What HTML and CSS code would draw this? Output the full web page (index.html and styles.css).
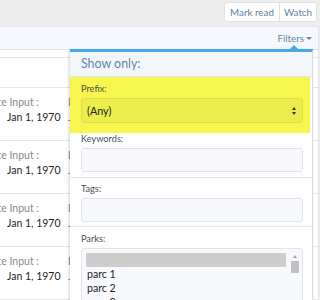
FILE: index.html
```html
<!DOCTYPE html>
<html>
<head>
<meta charset="utf-8">
<link rel="stylesheet" href="styles.css">
</head>
<body>
<div class="top">
  <div class="btn-group">
    <a class="btn">Mark read</a>
    <a class="btn">Watch</a>
  </div>
</div>
<div class="block">
  <div class="block-header">
    <span class="filters">Filters <span class="caret"></span></span>
  </div>
  <div class="list">
    <div class="list-head"></div>
    <div class="list-sub"></div>
    <div class="row"><div class="cell"><div class="lbl">Date Input :</div><div class="val">Jan 1, 1970</div></div><div class="cell2"><div class="lbl2">Last</div><div class="val2">Jan</div></div></div>
    <div class="row"><div class="cell"><div class="lbl">Date Input :</div><div class="val">Jan 1, 1970</div></div><div class="cell2"><div class="lbl2">Last</div><div class="val2">Jan</div></div></div>
    <div class="row"><div class="cell"><div class="lbl">Date Input :</div><div class="val">Jan 1, 1970</div></div><div class="cell2"><div class="lbl2">Last</div><div class="val2">Jan</div></div></div>
    <div class="row"><div class="cell"><div class="lbl">Date Input :</div><div class="val">Jan 1, 1970</div></div><div class="cell2"><div class="lbl2">Last</div><div class="val2">Jan</div></div></div>
  </div>
</div>
<div class="menu">
  <div class="menu-arrow"></div>
  <div class="menu-header">Show only:</div>
  <div class="menu-row highlight">
    <div class="field-label">Prefix:</div>
    <div class="select"><span>(Any)</span><span class="updown"></span></div>
  </div>
  <div class="menu-row kw">
    <div class="field-label">Keywords:</div>
    <div class="input"></div>
  </div>
  <div class="menu-row sep">
    <div class="field-label">Tags:</div>
    <div class="input"></div>
  </div>
  <div class="menu-row sep parks">
    <div class="field-label">Parks:</div>
    <div class="listbox">
      <div class="options">
        <div class="opt selected"></div>
        <div class="opt">parc 1</div>
        <div class="opt">parc 2</div>
        <div class="opt">parc 3</div>
      </div>
      <div class="scrollbar">
        <div class="sb-arrow"></div>
        <div class="sb-thumb"></div>
      </div>
    </div>
  </div>
</div>
</body>
</html>
```
FILE: styles.css
```css
* { box-sizing: border-box; }
html, body { margin: 0; padding: 0; }
body {
  width: 320px;
  height: 300px;
  overflow: hidden;
  background: #ededed;
  font-family: Lato, "Noto Sans", sans-serif;
  position: relative;
}
.top {
  height: 26px;
  display: flex;
  justify-content: flex-end;
  padding: 2px 3px 0 0;
}
.btn-group {
  display: flex;
  height: 20px;
  background: #fff;
  border: 1px solid #e2e2e2;
  border-radius: 3px;
}
.btn {
  font-size: 9.8px;
  color: #5f7f9c;
  line-height: 18px;
  text-align: center;
}
.btn:first-child { width: 54px; }
.btn:last-child { width: 37px; }
.btn + .btn { border-left: 1px solid #e2e2e2; }
.block {
  margin-right: 1px;
  border-top: 1px solid #dfe6ee;
  border-right: 1px solid #dfe4ea;
  background: #fff;
}
.block-header {
  height: 23px;
  background: #f5f9fd;
  display: flex;
  justify-content: flex-end;
  align-items: center;
  padding-right: 6px;
  border-bottom: 1px solid #dfe4ea;
}
.filters {
  font-size: 9.8px;
  color: #6a879f;
  display: flex;
  align-items: center;
  gap: 2px;
}
.caret {
  width: 0; height: 0;
  border-left: 3px solid transparent;
  border-right: 3px solid transparent;
  border-top: 3.5px solid #6a879f;
}
.list-head {
  height: 8px;
  border-bottom: 1px solid #e6e6e6;
}
.list-sub {
  height: 30px;
  border-bottom: 1px solid #e6e6e6;
}
.row {
  height: 53px;
  border-bottom: 1px solid #e6e6e6;
  display: flex;
  padding-top: 7px;
}
.cell {
  width: 67px;
  flex: none;
  overflow: hidden;
  display: flex;
  flex-direction: column;
  align-items: flex-end;
}
.lbl {
  font-size: 10.5px;
  color: #8a8a8a;
  line-height: 15px;
  white-space: nowrap;
  margin-right: 28px;
}
.val {
  align-self: flex-start;
  margin-left: 7px;
  font-size: 10.5px;
  color: #1e1e1e;
  line-height: 15px;
  white-space: nowrap;
}
.cell2 {
  padding-left: 1px;
}
.lbl2, .val2 {
  font-size: 10.5px;
  line-height: 15px;
  color: #8a8a8a;
}
.menu {
  position: absolute;
  left: 70px;
  top: 49px;
  width: 243px;
  height: 260px;
  background: #fff;
  border-top: 3px solid #47a7eb;
  border-right: 1px solid #d8dde3;
  box-shadow: -1px 1px 3px rgba(0,0,0,0.18);
}
.menu-arrow {
  position: absolute;
  top: -7px;
  left: 219px;
  width: 0; height: 0;
  border-left: 5px solid transparent;
  border-right: 5px solid transparent;
  border-bottom: 5px solid #47a7eb;
}
.menu-header {
  height: 25px;
  background: #f3f7fb;
  color: #5b87ad;
  font-size: 12.4px;
  line-height: 23px;
  padding-left: 11px;
  border-bottom: 1px solid #e3e8ee;
}
.menu-row {
  padding: 0 9px 4px 11px;
}
.highlight {
  background: #f6f64e;
  margin-right: 2px;
  padding: 6px 7px 10px 11px;
}
.kw { padding-bottom: 5px; }
.menu-row.sep { border-top: 1px solid #e6e6e6; padding-top: 5px; }
.menu-row.parks { padding-top: 6px; }
.field-label {
  font-size: 9.2px;
  color: #4e4e4e;
  line-height: 11px;
  margin-bottom: 4px;
}
.select {
  height: 25px;
  border: 1px solid #dede46;
  background: #ecec4c;
  border-radius: 3px;
  display: flex;
  align-items: center;
  justify-content: space-between;
  padding: 0 5px 0 5px;
  font-size: 10.8px;
  color: #222;
}
.updown {
  width: 5px;
  height: 8px;
  position: relative;
}
.updown::before, .updown::after {
  content: "";
  position: absolute;
  left: 0;
  border-left: 2.5px solid transparent;
  border-right: 2.5px solid transparent;
}
.updown::before { top: 0; border-bottom: 3.5px solid #333; }
.updown::after { bottom: 0; border-top: 3.5px solid #333; }
.input {
  height: 24px;
  border: 1px solid #dfe4ea;
  background: #f7f9fc;
  border-radius: 3px;
}
.listbox {
  height: 70px;
  border: 1px solid #dfe4ea;
  background: #f7f9fc;
  border-radius: 3px;
  display: flex;
  padding: 4px 2px 0 4px;
  overflow: hidden;
}
.options { flex: 1; }
.opt {
  font-size: 10.6px;
  color: #222;
  height: 14px;
  line-height: 14px;
  padding-left: 1px;
}
.opt.selected { background: #cdcdcd; }
.scrollbar {
  width: 10px;
  margin-left: 4px;
  display: flex;
  flex-direction: column;
  align-items: center;
}
.sb-arrow {
  margin-top: 2px;
  border-left: 2.5px solid transparent;
  border-right: 2.5px solid transparent;
  border-bottom: 3px solid #a3a3a3;
}
.sb-thumb {
  margin-top: 3px;
  width: 8px;
  height: 12px;
  background: #c1c1c1;
}
```
